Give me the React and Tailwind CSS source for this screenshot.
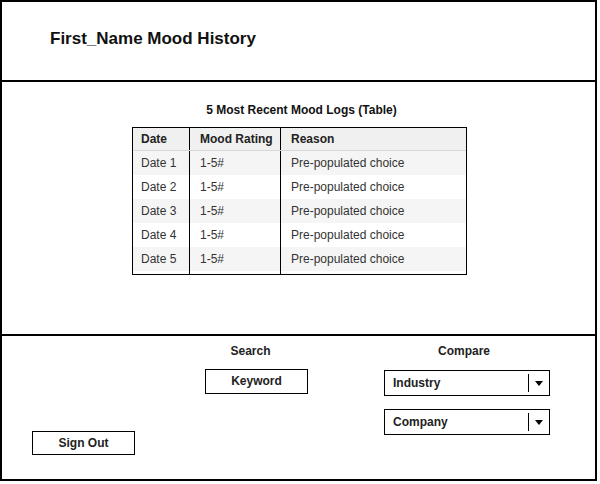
import React from "react";

const rows = [
  { date: "Date 1", rating: "1-5#", reason: "Pre-populated choice" },
  { date: "Date 2", rating: "1-5#", reason: "Pre-populated choice" },
  { date: "Date 3", rating: "1-5#", reason: "Pre-populated choice" },
  { date: "Date 4", rating: "1-5#", reason: "Pre-populated choice" },
  { date: "Date 5", rating: "1-5#", reason: "Pre-populated choice" },
];

function Select({ label }) {
  return (
    <div className="flex items-center h-[26px] border border-black bg-white">
      <span className="flex-1 pl-[8px] text-[12px] font-bold text-[#222]">{label}</span>
      <div className="w-px h-[18px] bg-black" />
      <div className="w-[20px] flex justify-center">
        <svg width="8" height="5" viewBox="0 0 8 5">
          <path d="M0 0 L8 0 L4 5 Z" fill="#000" />
        </svg>
      </div>
    </div>
  );
}

export default function App() {
  return (
    <div className="w-[600px] h-[484px] bg-white" style={{ fontFamily: '"Liberation Sans", Arial, sans-serif' }}>
      <div className="w-[597px] h-[481px] border-2 border-black flex flex-col">
        {/* Header */}
        <div className="h-[80px] border-b-2 border-black flex items-center pl-[48px] pb-[4px]">
          <h1 className="text-[17px] font-bold text-[#111]">First_Name Mood History</h1>
        </div>

        {/* Table */}
        <div className="h-[254px] border-b-2 border-black flex flex-col items-center">
          <div className="mt-[21px] text-[12px] font-bold text-[#111] leading-[14px] ml-[6px]">
            5 Most Recent Mood Logs (Table)
          </div>
          <div className="mt-[10px] ml-[2px] w-[335px] border border-black bg-white text-[12px] text-[#333]">
            <div className="grid grid-cols-[57px_91px_1fr] h-[23px] bg-[#f0f0f0] border-b border-[#d8d8d8] font-bold text-[#222]">
              <div className="flex items-center pl-[8px] border-r border-black">Date</div>
              <div className="flex items-center pl-[10px] border-r border-black">Mood Rating</div>
              <div className="flex items-center pl-[10px]">Reason</div>
            </div>
            {rows.map((r, i) => (
              <div
                key={i}
                className={`grid grid-cols-[57px_91px_1fr] h-[24px] ${i % 2 === 0 ? "bg-[#f5f5f5]" : "bg-white"}`}
              >
                <div className="flex items-center pl-[8px] border-r border-black">{r.date}</div>
                <div className="flex items-center pl-[10px] border-r border-black">{r.rating}</div>
                <div className="flex items-center pl-[10px]">{r.reason}</div>
              </div>
            ))}
            <div className="grid grid-cols-[57px_91px_1fr] h-[3px]">
              <div className="border-r border-black" />
              <div className="border-r border-black" />
              <div />
            </div>
          </div>
        </div>

        {/* Footer */}
        <div className="flex-1 flex items-start text-[12px] font-bold text-[#222]">
          <div className="ml-[30px] mt-[95px] w-[103px] h-[24px] border border-black flex items-center justify-center">
            Sign Out
          </div>
          <div className="ml-[70px] w-[103px] flex flex-col items-center">
            <div className="mt-[8px] leading-[14px] mr-[12px]">Search</div>
            <div className="mt-[11px] w-full h-[25px] pb-[1px] border border-black flex items-center justify-center">
              Keyword
            </div>
          </div>
          <div className="ml-[76px] w-[166px] flex flex-col">
            <div className="mt-[8px] leading-[14px] text-center pr-[6px]">Compare</div>
            <div className="mt-[12px]">
              <Select label="Industry" />
            </div>
            <div className="mt-[13px]">
              <Select label="Company" />
            </div>
          </div>
        </div>
      </div>
    </div>
  );
}
